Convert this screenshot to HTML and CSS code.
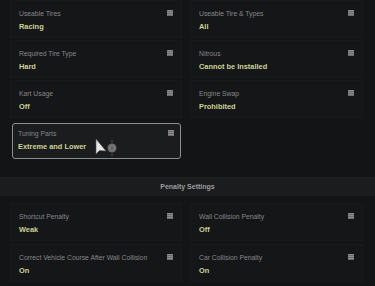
FILE: index.html
```html
<!DOCTYPE html>
<html>
<head>
<meta charset="utf-8">
<link rel="stylesheet" href="styles.css">
</head>
<body>
<div class="page">
  <div class="grid">
    <div class="card"><div class="label">Useable Tires</div><div class="value">Racing</div><span class="menu"></span></div>
    <div class="card"><div class="label">Useable Tire &amp; Types</div><div class="value">All</div><span class="menu"></span></div>
    <div class="card"><div class="label">Required Tire Type</div><div class="value">Hard</div><span class="menu"></span></div>
    <div class="card"><div class="label">Nitrous</div><div class="value">Cannot be Installed</div><span class="menu"></span></div>
    <div class="card"><div class="label">Kart Usage</div><div class="value">Off</div><span class="menu"></span></div>
    <div class="card"><div class="label">Engine Swap</div><div class="value">Prohibited</div><span class="menu"></span></div>
    <div class="card selected"><div class="label">Tuning Parts</div><div class="value">Extreme and Lower</div><span class="menu"></span>
      <svg class="cursor" width="22" height="24" viewBox="0 0 22 24">
        <path d="M1 1 L1 16 L4.5 12.5 L11 13 Z" fill="#e6e6e6" stroke="#555" stroke-width="0.6"/>
        <circle cx="17" cy="10" r="4.5" fill="#6a6a6a"/>
        <circle cx="17" cy="10" r="3" fill="#7c7c7c"/>
        <path d="M16.2 8.3 v3.4 M17.8 8.3 v3.4" stroke="#444" stroke-width="0.7"/>
        <path d="M15.8 3.6 L17 2.2 L18.2 3.6 Z M15.8 16.4 L17 17.8 L18.2 16.4 Z" fill="#7a7a7a"/>
      </svg>
    </div>
    <div class="card empty"></div>
  </div>
  <div class="section-head">Penalty Settings</div>
  <div class="grid second">
    <div class="card"><div class="label">Shortcut Penalty</div><div class="value">Weak</div><span class="menu"></span></div>
    <div class="card"><div class="label">Wall Collision Penalty</div><div class="value">Off</div><span class="menu"></span></div>
    <div class="card"><div class="label">Correct Vehicle Course After Wall Collision</div><div class="value">On</div><span class="menu"></span></div>
    <div class="card"><div class="label">Car Collision Penalty</div><div class="value">On</div><span class="menu"></span></div>
  </div>
</div>
</body>
</html>
```
FILE: styles.css
```css
html, body {
  margin: 0;
  padding: 0;
  background: #131416;
  width: 375px;
  height: 286px;
  overflow: hidden;
  font-family: "Liberation Sans", Arial, sans-serif;
}
.page {
  display: flex;
  flex-direction: column;
}
.grid {
  display: grid;
  grid-template-columns: 172px 173px;
  grid-auto-rows: 38px;
  column-gap: 8px;
  row-gap: 2px;
  padding: 0 12px 0 10px;
}
.card {
  position: relative;
  background: #151618;
  border: 1px solid #18191b;
  box-sizing: border-box;
  padding: 8px 8px 0 8px;
}
.card.empty {
  background: transparent;
  border-color: transparent;
}
.card.selected {
  margin: 3px 1px -1px 2px;
  padding: 5px 6px 0 5px;
  border: 1px solid #8d8d8f;
  border-radius: 3px;
  background: #1b1c1e;
}
.label {
  font-size: 6.8px;
  line-height: 9px;
  color: #858688;
  white-space: nowrap;
}
.value {
  margin-top: 4px;
  font-size: 7.4px;
  line-height: 10px;
  font-weight: bold;
  color: #cdd196;
  white-space: nowrap;
}
.menu {
  position: absolute;
  top: 9px;
  right: 8px;
  width: 6px;
  height: 6px;
  background:
    linear-gradient(#8a8a8c, #8a8a8c) 0 0 / 6px 1px no-repeat,
    linear-gradient(#8a8a8c, #8a8a8c) 0 2px / 6px 1px no-repeat,
    linear-gradient(#8a8a8c, #8a8a8c) 0 4px / 6px 1px no-repeat,
    #6e6e70;
}
.card.selected .menu {
  top: 6px;
  right: 6px;
}
.cursor {
  position: absolute;
  left: 82px;
  top: 14px;
}
.section-head {
  margin-top: 19px;
  height: 19px;
  background: #1b1c1e;
  border-top: 1px solid #202123;
  box-sizing: border-box;
  text-align: center;
  font-size: 7px;
  line-height: 18px;
  font-weight: bold;
  color: #9b9c9e;
}
.grid.second {
  margin-top: 7px;
  row-gap: 3px;
}
```
